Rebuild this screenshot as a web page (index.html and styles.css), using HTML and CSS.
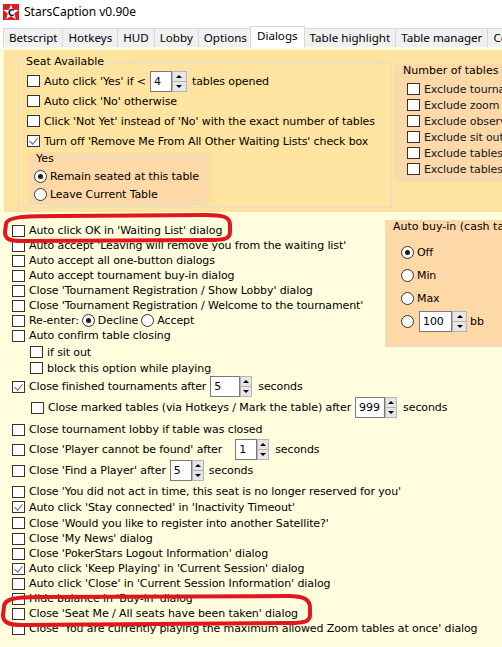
FILE: index.html
```html
<!DOCTYPE html>
<html lang="en">
<head>
    <meta charset="UTF-8">
    <meta name="viewport" content="width=device-width, initial-scale=1.0">
    <title>StarsCaption v0.90e</title>
    <link rel="stylesheet" href="styles.css">
</head>
<body>
<div class="window">
    <div class="titlebar">
        <svg class="app-icon" width="16" height="16" viewBox="0 0 16 16">
            <rect width="16" height="16" fill="#e01b22"/>
            <polygon fill="#fff" points="8,0.5 10,5.8 15.6,6 11.2,9.5 12.9,15.2 8,11.9 3.1,15.2 4.8,9.5 0.4,6 6,5.8"/>
            <text x="8.2" y="11.6" font-size="8.5" font-weight="bold" text-anchor="middle" fill="#000" font-family="DejaVu Sans">C</text>
        </svg>
        <span class="title">StarsCaption v0.90e</span>
    </div>

    <div class="tabs">
        <div class="tab">Betscript</div>
        <div class="tab">Hotkeys</div>
        <div class="tab">HUD</div>
        <div class="tab">Lobby</div>
        <div class="tab">Options</div>
        <div class="tab active">Dialogs</div>
        <div class="tab">Table highlight</div>
        <div class="tab">Table manager</div>
        <div class="tab">Colors</div>
    </div>

    <div class="page">
        <div class="seat-panel">
            <fieldset class="group seat-group">
                <legend>Seat Available</legend>
                <div class="row r20">
                    <span class="check"></span>Auto click 'Yes' if &lt;
                    <span class="spin gap-l4"><span class="spin-edit w22">4</span><span class="spin-btns wide"><span class="up"></span><span class="down"></span></span></span>
                    <span class="gap-l5">tables opened</span>
                </div>
                <div class="row r20"><span class="check"></span>Auto click 'No' otherwise</div>
                <div class="row r20"><span class="check"></span>Click 'Not Yet' instead of 'No' with the exact number of tables</div>
                <div class="row r20"><span class="check on"></span>Turn off 'Remove Me From All Other Waiting Lists' check box</div>
                <div class="peach yes-panel">
                    <fieldset class="group yes-group">
                        <legend>Yes</legend>
                        <div class="row r18"><span class="radio on"></span>Remain seated at this table</div>
                        <div class="row r18"><span class="radio"></span>Leave Current Table</div>
                    </fieldset>
                </div>
            </fieldset>

            <div class="peach count-panel">
                <fieldset class="group count-group">
                    <legend>Number of tables</legend>
                    <div class="row r16"><span class="check"></span>Exclude tournaments</div>
                    <div class="row r16"><span class="check"></span>Exclude zoom tables</div>
                    <div class="row r16"><span class="check"></span>Exclude observed tables</div>
                    <div class="row r16"><span class="check"></span>Exclude sit out tables</div>
                    <div class="row r16"><span class="check"></span>Exclude tables waiting</div>
                    <div class="row r16"><span class="check"></span>Exclude tables closing</div>
                </fieldset>
            </div>
        </div>

        <div class="dialogs-top">
            <div class="list">
                <div class="row"><span class="check"></span>Auto click OK in 'Waiting List' dialog</div>
                <div class="row"><span class="check"></span>Auto accept 'Leaving will remove you from the waiting list'</div>
                <div class="row"><span class="check"></span>Auto accept all one-button dialogs</div>
                <div class="row"><span class="check"></span>Auto accept tournament buy-in dialog</div>
                <div class="row"><span class="check"></span>Close 'Tournament Registration / Show Lobby' dialog</div>
                <div class="row"><span class="check"></span>Close 'Tournament Registration / Welcome to the tournament'</div>
                <div class="row">
                    <span class="check"></span>Re-enter:
                    <span class="radio on gap-l3"></span>Decline
                    <span class="radio gap-l3"></span>Accept
                </div>
                <div class="row"><span class="check"></span>Auto confirm table closing</div>
                <div class="row r16 sub mt1"><span class="check"></span>if sit out</div>
                <div class="row r16 sub"><span class="check"></span>block this option while playing</div>
            </div>

            <div class="peach buyin-panel">
                <fieldset class="group buyin-group">
                    <legend>Auto buy-in (cash tables)</legend>
                    <div class="row r23"><span class="radio on"></span>Off</div>
                    <div class="row r23"><span class="radio"></span>Min</div>
                    <div class="row r23"><span class="radio"></span>Max</div>
                    <div class="row r23">
                        <span class="radio"></span>
                        <span class="spin gap-l2"><span class="spin-edit w33">100</span><span class="spin-btns wide"><span class="up"></span><span class="down"></span></span></span>
                        <span class="gap-l3">bb</span>
                    </div>
                </fieldset>
            </div>
        </div>

        <div class="list">
            <div class="row r21">
                <span class="check on"></span>Close finished tournaments after
                <span class="spin gap-l4"><span class="spin-edit w30">5</span><span class="spin-btns"><span class="up"></span><span class="down"></span></span></span>
                <span class="gap-l6">seconds</span>
            </div>
            <div class="row r21 sub2">
                <span class="check"></span>Close marked tables (via Hotkeys / Mark the table) after
                <span class="spin gap-l4"><span class="spin-edit w30">999</span><span class="spin-btns"><span class="up"></span><span class="down"></span></span></span>
                <span class="gap-l6">seconds</span>
            </div>
            <div class="row mt4"><span class="check"></span>Close tournament lobby if table was closed</div>
            <div class="row r21 mt2">
                <span class="check"></span>Close 'Player cannot be found' after
                <span class="spin gap-l13"><span class="spin-edit w22">1</span><span class="spin-btns"><span class="up"></span><span class="down"></span></span></span>
                <span class="gap-l6">seconds</span>
            </div>
            <div class="row r21">
                <span class="check"></span>Close 'Find a Player' after
                <span class="spin gap-l4"><span class="spin-edit w22">5</span><span class="spin-btns"><span class="up"></span><span class="down"></span></span></span>
                <span class="gap-l5">seconds</span>
            </div>
            <div class="row mt3"><span class="check"></span>Close 'You did not act in time, this seat is no longer reserved for you'</div>
            <div class="row r16"><span class="check on"></span>Auto click 'Stay connected' in 'Inactivity Timeout'</div>
            <div class="row r16"><span class="check"></span>Close 'Would you like to register into another Satellite?'</div>
            <div class="row"><span class="check"></span>Close 'My News' dialog</div>
            <div class="row"><span class="check"></span>Close 'PokerStars Logout Information' dialog</div>
            <div class="row"><span class="check on"></span>Auto click 'Keep Playing' in 'Current Session' dialog</div>
            <div class="row"><span class="check"></span>Auto click 'Close' in 'Current Session Information' dialog</div>
            <div class="row"><span class="check"></span>Hide balance in 'Buy-in' dialog</div>
            <div class="row"><span class="check"></span>Close 'Seat Me / All seats have been taken' dialog</div>
            <div class="row"><span class="check"></span>Close 'You are currently playing the maximum allowed Zoom tables at once' dialog</div>
        </div>
    </div>

    <!-- hand-drawn red marks on top of the screenshot -->
    <svg class="marks" width="502" height="647" viewBox="0 0 502 647">
        <path d="M6,224 C7,217 22,216 60,216 L205,215 C224,215 230,217 230,225 L230,232 C230,239 224,240 210,240 L22,241 C9,241 5,239 5,232 Z"/>
        <path d="M4,607 C4,599 14,597 40,597 L288,596 C305,596 310,600 310,608 L310,615 C310,622 303,623 290,623 L22,625 C8,625 3,622 3,615 Z"/>
    </svg>
</div>
</body>
</html>
```

FILE: styles.css
```css
body {
    margin: 0;
    font-family: "DejaVu Sans", Tahoma, sans-serif;
    font-size: 11px;
    color: #000;
    background-color: #fff;
    overflow: hidden;
}

.window {
    position: relative;
    width: 502px;
    height: 647px;
    overflow: hidden;
}

/* title bar */
.titlebar {
    height: 27px;
    display: flex;
    align-items: flex-start;
    padding-left: 3px;
    font-family: "Noto Sans", "Open Sans", sans-serif;
    font-size: 12px;
}

.app-icon {
    margin-top: 4px;
    flex: none;
}

.title {
    margin-left: 5px;
    margin-top: 4px;
    line-height: 16px;
}

/* tabs */
.tabs {
    height: 20px;
    display: flex;
    align-items: flex-end;
    padding-left: 3px;
    font-family: "Noto Sans", "Open Sans", sans-serif;
    font-size: 11.6px;
    white-space: nowrap;
}

.tab {
    height: 19px;
    line-height: 18px;
    padding: 0 5px;
    margin-right: -1px;
    border: 1px solid #d9d9d9;
    border-bottom: none;
    background-color: #f0f0f0;
    box-sizing: border-box;
    flex: none;
}

.tab.active {
    position: relative;
    height: 22px;
    line-height: 18px;
    margin: 0 -1px -1px -2px;
    padding: 0 6px;
    background-color: #fff;
    z-index: 1;
}

/* tab page */
.page {
    height: 600px;
    background-color: #fffddd;
    padding-top: 3px;
    box-sizing: border-box;
}

.seat-panel {
    height: 162px;
    margin-left: 4px;
    background-color: #ffe4a1;
    display: flex;
    align-items: flex-start;
    overflow: hidden;
}

.peach {
    background-color: #fed9a7;
}

.group {
    margin: 0;
    min-width: 0;
    border: 1px solid #e3ddcc;
    padding: 0;
}

.group legend {
    padding: 0 1px;
    line-height: 14px;
    white-space: nowrap;
}

.seat-group {
    width: 374px;
    margin: 5px 0 0 14px;
    padding: 2px 0 2px 8px;
    box-sizing: border-box;
    flex: none;
}

.seat-group legend {
    margin-left: -2px;
}

.yes-panel {
    width: 180px;
    margin: 1px 0 0 2px;
    padding: 0 3px 1px 3px;
    box-sizing: border-box;
}

.yes-group {
    padding: 1px 0 0 1px;
}

.yes-group legend {
    margin-left: 1px;
}

.count-panel {
    width: 150px;
    height: 118px;
    margin: 14px 0 0 3px;
    padding: 0 2px;
    flex: none;
}

.count-group {
    height: 116px;
    padding: 3px 0 0 9px;
    box-sizing: border-box;
}

.count-group legend {
    margin-left: -5px;
}

.count-group .row {
    color: #141432;
}

/* dialog options */
.dialogs-top {
    display: flex;
    align-items: flex-start;
}

.list {
    padding-left: 12px;
}

.dialogs-top .list {
    width: 373px;
    padding-top: 11px;
    flex: none;
}

.buyin-panel {
    width: 140px;
    height: 127px;
    margin-top: 8px;
    padding: 0 2px;
    flex: none;
}

.buyin-group {
    height: 125px;
    padding: 7px 0 0 13px;
    box-sizing: border-box;
}

.buyin-group legend {
    margin-left: -9px;
}

.row {
    display: flex;
    align-items: center;
    height: 15px;
    white-space: nowrap;
    letter-spacing: -0.1px;
}

.r16 { height: 16px; }
.r18 { height: 18px; }
.r20 { height: 20px; }
.r21 { height: 21px; }
.r23 { height: 23px; }

.mt1 { margin-top: 1px; }
.mt2 { margin-top: 2px; }
.mt3 { margin-top: 3px; }
.mt4 { margin-top: 4px; }

.sub { padding-left: 18px; }
.sub2 { padding-left: 19px; }

.gap-l2 { margin-left: 2px; }
.gap-l3 { margin-left: 3px; }
.gap-l4 { margin-left: 4px; }
.gap-l5 { margin-left: 5px; }
.gap-l6 { margin-left: 6px; }
.gap-l13 { margin-left: 13px; }

/* checkbox */
.check {
    position: relative;
    width: 13px;
    height: 12px;
    margin-right: 4px;
    border: 1px solid #333;
    background-color: #fff;
    box-sizing: border-box;
    flex: none;
}

.check.on::after {
    content: "";
    position: absolute;
    left: 3px;
    top: 0;
    width: 4px;
    height: 7px;
    border: solid #666;
    border-width: 0 1px 1px 0;
    transform: rotate(40deg);
}

/* radio */
.radio {
    position: relative;
    width: 13px;
    height: 13px;
    margin-right: 3px;
    border: 1px solid #333;
    border-radius: 50%;
    background-color: #fff;
    box-sizing: border-box;
    flex: none;
}

.radio.on::after {
    content: "";
    position: absolute;
    left: 3px;
    top: 3px;
    width: 5px;
    height: 5px;
    border-radius: 50%;
    background-color: #1a1a1a;
}

/* spin edit */
.spin {
    display: flex;
    height: 21px;
    flex: none;
}

.spin-edit {
    height: 21px;
    line-height: 19px;
    padding-left: 3px;
    border: 1px solid #7a7a7a;
    background-color: #fff;
    box-sizing: border-box;
}

.w22 { width: 22px; }
.w30 { width: 30px; }
.w33 { width: 33px; }

.spin-btns {
    width: 12px;
    display: flex;
    flex-direction: column;
}

.spin-btns.wide {
    width: 15px;
}

.spin-btns .up, .spin-btns .down {
    flex: 1;
    display: flex;
    align-items: center;
    justify-content: center;
    border: 1px solid #b4b4b4;
    background-color: #e6e6e6;
}

.spin-btns .down {
    border-top: none;
}

.spin-btns .up::after {
    content: "";
    border-left: 3px solid transparent;
    border-right: 3px solid transparent;
    border-bottom: 3px solid #000;
}

.spin-btns .down::after {
    content: "";
    border-left: 3px solid transparent;
    border-right: 3px solid transparent;
    border-top: 3px solid #000;
}

/* red marks */
.marks {
    position: absolute;
    left: 0;
    top: 0;
    pointer-events: none;
}

.marks path {
    fill: none;
    stroke: #e2161d;
    stroke-width: 4;
    stroke-linecap: round;
    stroke-linejoin: round;
}
```
